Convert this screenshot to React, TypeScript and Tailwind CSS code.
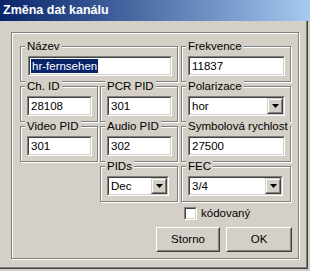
import React from "react";

const etched = "border border-[#808080] shadow-[inset_1px_1px_0_#ffffff,1px_1px_0_#ffffff]";

function Group({ label, w, children }: { label: string; w: string; children?: React.ReactNode }) {
  return (
    <div className={`relative h-[36px] ${w} ${etched} pt-[9px] pl-[6px]`}>
      <span className="absolute -top-[8px] left-[4px] bg-[#d4d0c8] px-[2px] leading-[14px]">{label}</span>
      {children}
    </div>
  );
}

function Sunken({ w, children }: { w: string; children?: React.ReactNode }) {
  return (
    <div className={`${w} h-[20px] border border-t-[#808080] border-l-[#808080] border-b-white border-r-white`}>
      <div className="h-full w-full border border-t-[#404040] border-l-[#404040] border-b-[#d4d0c8] border-r-[#d4d0c8] bg-white flex items-center">
        {children}
      </div>
    </div>
  );
}

function Edit({ w, value, selected }: { w: string; value: string; selected?: boolean }) {
  return (
    <Sunken w={w}>
      <span className={`ml-[1px] pl-[1px] pr-[1px] leading-[14px] ${selected ? "bg-[#0a246a] text-white" : ""}`}>{value}</span>
    </Sunken>
  );
}

function Combo({ w, value }: { w: string; value: string }) {
  return (
    <Sunken w={w}>
      <span className="ml-[2px] flex-1 leading-[14px]">{value}</span>
      <div className="w-[16px] h-full border border-t-[#d4d0c8] border-l-[#d4d0c8] border-b-[#404040] border-r-[#404040] bg-[#d4d0c8]">
        <div className="h-full w-full border border-t-white border-l-white border-b-[#808080] border-r-[#808080] flex items-center justify-center">
          <svg width="7" height="4" viewBox="0 0 7 4">
            <path d="M0 0h7L3.5 4z" fill="#000" />
          </svg>
        </div>
      </div>
    </Sunken>
  );
}

function Button({ w, label }: { w: string; label: string }) {
  return (
    <div className={`${w} h-[25px] border border-t-white border-l-white border-b-[#404040] border-r-[#404040]`}>
      <div className="h-full w-full border border-t-[#d4d0c8] border-l-[#d4d0c8] border-b-[#808080] border-r-[#808080] flex items-center justify-center">
        {label}
      </div>
    </div>
  );
}

export default function App() {
  return (
    <div className="w-[310px] h-[271px] bg-[#d4d0c8] overflow-hidden flex flex-col text-[11.5px] text-black font-['Liberation_Sans',Arial,sans-serif]">
      <div className="h-[21px] shrink-0 bg-gradient-to-r from-[#0a246a] to-[#a6caf0] flex items-center pl-[3px] text-white font-bold text-[12.5px]">
        Změna dat kanálu
      </div>
      <div className="flex-1 mr-[2px] mb-[2px] border-r border-b border-[#404040] shadow-[inset_-1px_-1px_0_#808080] pt-[11px] pl-[11px]">
        <div className={`w-[288px] h-[227px] ${etched} pt-[13px] pl-[8px] flex flex-col gap-[4px]`}>
          <div className="flex gap-[3px]">
            <Group label="Název" w="w-[158px]">
              <div className="pl-[1px]">
                <Edit w="w-[144px]" value="hr-fernsehen" selected />
              </div>
            </Group>
            <Group label="Frekvence" w="w-[110px]">
              <Edit w="w-[97px]" value="11837" />
            </Group>
          </div>
          <div className="flex">
            <Group label="Ch. ID" w="w-[78px]">
              <Edit w="w-[65px]" value="28108" />
            </Group>
            <div className="ml-[2px]">
              <Group label="PCR PID" w="w-[78px]">
                <Edit w="w-[65px]" value="301" />
              </Group>
            </div>
            <div className="ml-[3px]">
              <Group label="Polarizace" w="w-[110px]">
                <Combo w="w-[97px]" value="hor" />
              </Group>
            </div>
          </div>
          <div className="flex">
            <Group label="Video PID" w="w-[78px]">
              <Edit w="w-[65px]" value="301" />
            </Group>
            <div className="ml-[2px]">
              <Group label="Audio PID" w="w-[78px]">
                <Edit w="w-[65px]" value="302" />
              </Group>
            </div>
            <div className="ml-[3px]">
              <Group label="Symbolová rychlost" w="w-[110px]">
                <Edit w="w-[97px]" value="27500" />
              </Group>
            </div>
          </div>
          <div className="flex">
            <div className="w-[78px]" />
            <div className="ml-[2px]">
              <Group label="PIDs" w="w-[78px]">
                <Combo w="w-[62px]" value="Dec" />
              </Group>
            </div>
            <div className="ml-[3px]">
              <Group label="FEC" w="w-[110px]">
                <Combo w="w-[95px]" value="3/4" />
              </Group>
            </div>
          </div>
          <div className="flex items-center ml-[164px] mt-[0px]">
            <div className="w-[13px] h-[13px] border border-t-[#808080] border-l-[#808080] border-b-white border-r-white">
              <div className="h-full w-full border border-t-[#404040] border-l-[#404040] border-b-[#d4d0c8] border-r-[#d4d0c8] bg-white" />
            </div>
            <span className="ml-[4px] leading-[14px]">kódovaný</span>
          </div>
          <div className="flex ml-[136px] mt-[3px] gap-[6px]">
            <Button w="w-[64px]" label="Storno" />
            <Button w="w-[66px]" label="OK" />
          </div>
        </div>
      </div>
    </div>
  );
}
